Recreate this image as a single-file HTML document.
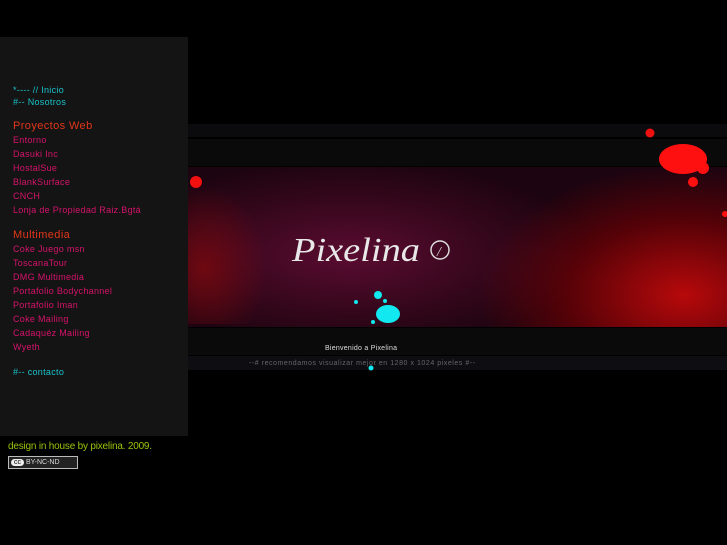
<!DOCTYPE html>
<html><head><meta charset="utf-8"><style>
body{margin:0;width:727px;height:545px;background:#000;position:relative;overflow:hidden;font-family:"Liberation Sans",sans-serif;}
#side{position:absolute;left:0;top:37px;width:188px;height:399px;background:#141414;}
.l{position:absolute;left:13px;font-size:9px;white-space:nowrap;letter-spacing:0.3px}
.c{color:#19c4cc}.p{color:#d6136b}.h{color:#e2361a;font-size:11px;letter-spacing:0.4px}
#ban{position:absolute;left:188px;top:124px;width:539px;height:247px;}
</style></head><body>
<div id="side">
<div class="l c" style="top:48px">*---- // Inicio</div>
<div class="l c" style="top:60px">#-- Nosotros</div>
<div class="l h" style="top:83px">Proyectos Web</div>
<div class="l p" style="top:98px">Entorno</div>
<div class="l p" style="top:112px">Dasuki Inc</div>
<div class="l p" style="top:126px">HostalSue</div>
<div class="l p" style="top:140px">BlankSurface</div>
<div class="l p" style="top:154px">CNCH</div>
<div class="l p" style="top:168px">Lonja de Propiedad Raiz.Bgtá</div>
<div class="l h" style="top:192px">Multimedia</div>
<div class="l p" style="top:207px">Coke Juego msn</div>
<div class="l p" style="top:221px">ToscanaTour</div>
<div class="l p" style="top:235px">DMG Multimedia</div>
<div class="l p" style="top:249px">Portafolio Bodychannel</div>
<div class="l p" style="top:263px">Portafolio Iman</div>
<div class="l p" style="top:277px">Coke Mailing</div>
<div class="l p" style="top:291px">Cadaquéz Mailing</div>
<div class="l p" style="top:305px">Wyeth</div>
<div class="l c" style="top:330px">#-- contacto</div>
</div>
<div style="position:absolute;left:8px;top:441px;font-size:10px;color:#9ac40c;letter-spacing:-0.2px">design in house by pixelina. 2009.</div>
<div style="position:absolute;left:8px;top:456px;width:68px;height:11px;border:1px solid #bbb;background:#222;color:#ddd;font-size:7px;line-height:11px;"><span style="background:#eee;color:#000;padding:0 3px;border-radius:5px;margin-left:2px">cc</span> BY-NC-ND</div>
<div id="ban">
<div style="position:absolute;left:0;top:0;width:539px;height:13px;background:#0b0b0d"></div>
<div style="position:absolute;left:0;top:15px;width:539px;height:27px;background:#0a0a0a"></div>
<div style="position:absolute;left:0;top:43px;width:539px;height:160px;background:radial-gradient(ellipse 45% 60% at 30% 55%,#5a0c30,#2e0618 70%,#1c0410),#2a0616"></div>
<div style="position:absolute;left:250px;top:43px;width:289px;height:160px;background:radial-gradient(ellipse 75% 85% at 85% 80%,rgba(210,10,10,.85),rgba(130,0,0,.55) 55%,rgba(0,0,0,0) 95%)"></div>
<div style="position:absolute;left:0;top:60px;width:80px;height:140px;background:radial-gradient(ellipse at 20% 60%,rgba(150,10,10,.6),rgba(0,0,0,0) 70%)"></div>
<div style="position:absolute;left:0;top:204px;width:539px;height:27px;background:#0a0a0a"></div>
<div style="position:absolute;left:0;top:232px;width:539px;height:14px;background:#0e0e12"></div>
<svg width="539" height="247" style="position:absolute;left:0;top:0">
<circle cx="8" cy="58" r="6" fill="#f01010"/>
<circle cx="462" cy="9" r="4.5" fill="#f01010"/>
<ellipse cx="495" cy="35" rx="24" ry="15" fill="#ff1010"/>
<circle cx="505" cy="58" r="5" fill="#ff1010"/>
<circle cx="515" cy="44" r="6" fill="#ff1010"/>
<circle cx="537" cy="90" r="3" fill="#ff1010"/>
<ellipse cx="200" cy="190" rx="12" ry="9" fill="#12e8f0"/>
<circle cx="190" cy="171" r="4" fill="#12e8f0"/>
<circle cx="197" cy="177" r="2" fill="#12e8f0"/>
<circle cx="168" cy="178" r="2" fill="#12e8f0"/>
<circle cx="185" cy="198" r="2" fill="#12e8f0"/>
<circle cx="183" cy="244" r="2.5" fill="#12e8f0"/>
<text x="104" y="137" font-family="Liberation Serif,serif" font-style="italic" font-size="34" fill="#e8e8e8" textLength="128" lengthAdjust="spacingAndGlyphs">Pixelina</text>
<circle cx="252" cy="126" r="9" fill="none" stroke="#ddd" stroke-width="1.5"/>
<text x="249" y="132" font-family="Liberation Serif,serif" font-style="italic" font-size="14" fill="#ddd">/</text>
<text x="137" y="226" font-size="7" fill="#ddd" textLength="72">Bienvenido a Pixelina</text>
<text x="61" y="241" font-size="7" fill="#666" textLength="226">--# recomendamos visualizar mejor en 1280 x 1024 pixeles #--</text>
</svg>
</div>
</body></html>
